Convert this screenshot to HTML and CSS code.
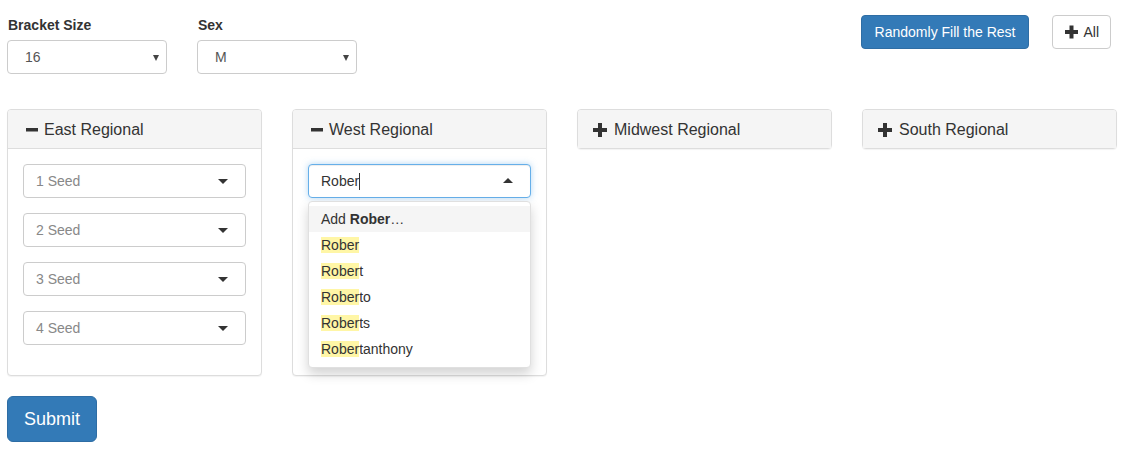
FILE: index.html
```html
<!DOCTYPE html>
<html>
<head>
<meta charset="utf-8">
<link rel="stylesheet" href="styles.css">
</head>
<body>
<div class="page">
  <div class="top">
    <div class="filters">
      <div class="form-group">
        <label class="lbl">Bracket Size</label>
        <div class="native-select"><span>16</span><span class="mini-caret"></span></div>
      </div>
      <div class="form-group">
        <label class="lbl">Sex</label>
        <div class="native-select"><span>M</span><span class="mini-caret"></span></div>
      </div>
    </div>
    <div class="actions">
      <button class="btn btn-primary btn-fill">Randomly Fill the Rest</button>
      <button class="btn btn-default"><svg class="ico" width="14" height="14" viewBox="0 0 14 14"><rect x="0" y="5" width="13" height="4" fill="#333"/><rect x="4.5" y="0.5" width="4" height="13" fill="#333"/></svg>All</button>
    </div>
  </div>

  <div class="panels">
    <div class="panel">
      <div class="panel-heading"><span class="hico"><svg width="15" height="18" viewBox="0 0 15 18"><rect x="3" y="7" width="12" height="3.5" fill="#333"/></svg></span>East Regional</div>
      <div class="panel-body">
        <div class="sel"><span class="ph">1 Seed</span><span class="caret"></span></div>
        <div class="sel"><span class="ph">2 Seed</span><span class="caret"></span></div>
        <div class="sel"><span class="ph">3 Seed</span><span class="caret"></span></div>
        <div class="sel"><span class="ph">4 Seed</span><span class="caret"></span></div>
      </div>
    </div>

    <div class="panel">
      <div class="panel-heading"><span class="hico"><svg width="15" height="18" viewBox="0 0 15 18"><rect x="3" y="7" width="12" height="3.5" fill="#333"/></svg></span>West Regional</div>
      <div class="panel-body">
        <div class="sel-wrap">
          <div class="sel focus"><span class="typed">Rober</span><span class="cursor"></span><span class="caret up"></span></div>
          <div class="dropdown">
            <div class="opt active">Add <b>Rober</b>…</div>
            <div class="opt"><span class="hl">Rober</span></div>
            <div class="opt"><span class="hl">Rober</span>t</div>
            <div class="opt"><span class="hl">Rober</span>to</div>
            <div class="opt"><span class="hl">Rober</span>ts</div>
            <div class="opt"><span class="hl">Rober</span>tanthony</div>
          </div>
        </div>
        <div class="sel covered"><span class="ph">2 Seed</span><span class="caret"></span></div>
        <div class="sel covered"><span class="ph">3 Seed</span><span class="caret"></span></div>
        <div class="sel covered"><span class="ph">4 Seed</span><span class="caret"></span></div>
      </div>
    </div>

    <div class="panel">
      <div class="panel-heading"><span class="hico"><svg width="15" height="18" viewBox="0 0 15 18"><rect x="0" y="7" width="14" height="4" fill="#333"/><rect x="5" y="2" width="4" height="14" fill="#333"/></svg></span>Midwest Regional</div>
    </div>

    <div class="panel">
      <div class="panel-heading"><span class="hico"><svg width="15" height="18" viewBox="0 0 15 18"><rect x="0" y="7" width="14" height="4" fill="#333"/><rect x="5" y="2" width="4" height="14" fill="#333"/></svg></span>South Regional</div>
    </div>
  </div>

  <button class="btn btn-primary btn-lg">Submit</button>
</div>
</body>
</html>
```

FILE: styles.css
```css
* { box-sizing: border-box; }
html, body { margin: 0; padding: 0; background: #fff; }
body {
  font-family: "Liberation Sans", Arial, Helvetica, sans-serif;
  font-size: 14px;
  line-height: 20px;
  color: #333;
}
.page { padding: 15px 7px 0 7px; }

.top { display: flex; align-items: flex-start; margin-bottom: 35px; }
.filters { display: flex; gap: 30px; }
.form-group { width: 160px; }
.lbl { display: block; font-weight: bold; margin-bottom: 5px; padding-left: 1px; }
.native-select {
  height: 34px;
  border: 1px solid #ccc;
  border-radius: 4px;
  display: flex;
  align-items: center;
  justify-content: space-between;
  padding: 0 7px 0 17px;
  color: #555;
  background: #fff;
}
.mini-caret {
  width: 0; height: 0;
  border-left: 3.5px solid transparent;
  border-right: 3.5px solid transparent;
  border-top: 6px solid #444;
  margin-top: 1px;
}

.actions { margin-left: auto; margin-right: 12px; display: flex; gap: 23px; }
.btn {
  font-family: inherit;
  font-size: 14px;
  line-height: 20px;
  padding: 6px 12px;
  border-radius: 4px;
  border: 1px solid transparent;
  cursor: pointer;
  display: inline-flex;
  align-items: center;
}
.btn-fill { padding: 6px 13px; }
.btn-primary { background: #337ab7; border-color: #2e6da4; color: #fff; }
.btn-default { background: #fff; border-color: #ccc; color: #333; padding: 6px 11px; }
.btn .ico { margin-right: 4px; margin-left: 1px; }
.btn-lg { font-size: 18px; line-height: 24px; padding: 10px 16px; border-radius: 6px; height: 46px; }

.panels {
  display: grid;
  grid-template-columns: repeat(4, 255px);
  column-gap: 30px;
  align-items: start;
  margin-bottom: 20px;
}
.panel {
  border: 1px solid #ddd;
  border-radius: 4px;
  background: #fff;
  box-shadow: 0 1px 1px rgba(0,0,0,.05);
}
.panel-heading {
  background: #f5f5f5;
  padding: 11px 15px 9px 15px;
  font-size: 16px;
  line-height: 18px;
  display: flex;
  align-items: center;
  border-radius: 3px 3px 0 0;
}
.panel-body { border-top: 1px solid #ddd; padding: 15px; }
.hico { display: inline-flex; width: 15px; margin-right: 6px; margin-top: -1px; }

.sel {
  position: relative;
  height: 34px;
  border: 1px solid #ccc;
  border-radius: 4px;
  padding: 6px 12px;
  margin-bottom: 15px;
  display: flex;
  align-items: center;
  background: #fff;
}
.sel.covered .ph { visibility: hidden; }
.ph { color: #888; }
.caret {
  position: absolute;
  right: 17px;
  top: 14px;
  width: 0; height: 0;
  border-left: 5px solid transparent;
  border-right: 5px solid transparent;
  border-top: 5px solid #333;
}
.caret.up { border-top: none; border-bottom: 5px solid #333; top: 13px; }
.sel.focus {
  border-color: #66afe9;
  box-shadow: inset 0 1px 1px rgba(0,0,0,.075), 0 0 6px rgba(102,175,233,.5);
}
.typed { color: #333; }
.cursor { display: inline-block; width: 1px; height: 17px; background: #333; }

.sel-wrap { position: relative; margin-bottom: 15px; }
.sel-wrap .sel { margin-bottom: 0; }
.dropdown {
  position: absolute;
  top: 37px;
  left: 0;
  right: 0;
  z-index: 10;
  background: #fff;
  border: 1px solid #e0e0e0;
  border-radius: 4px;
  box-shadow: 0 6px 12px rgba(0,0,0,.175);
  padding: 4px 0 5px 0;
}
.opt { padding: 3px 12px; line-height: 20px; color: #333; }
.opt.active { background: #f5f5f5; }
.hl { background: #fff6a6; }
```
